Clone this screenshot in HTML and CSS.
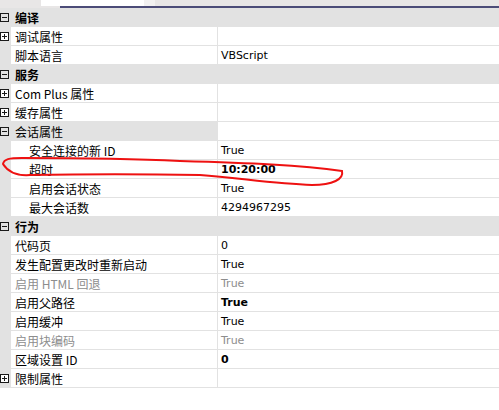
FILE: index.html
```html
<!DOCTYPE html>
<html lang="zh-CN">
<head>
    <meta charset="UTF-8">
    <meta name="viewport" content="width=device-width, initial-scale=1.0">
    <title>属性</title>
    <link rel="stylesheet" href="styles.css">
</head>
<body>
    <div class="page">
        <div class="topbar">
            <div class="tab"></div>
            <div class="rule"></div>
        </div>

        <div class="grid">
            <div class="row cat">
                <span class="gutter"><svg class="toggle" viewBox="0 0 9 9"><rect x="0.5" y="0.5" width="8" height="8"/><path d="M2 4.5h5"/></svg></span>
                <span class="name">编译</span>
            </div>
            <div class="row">
                <span class="gutter"><svg class="toggle plus" viewBox="0 0 9 9"><rect x="0.5" y="0.5" width="8" height="8"/><path d="M2 4.5h5M4.5 2v5"/></svg></span>
                <span class="name">调试属性</span>
                <span class="value"></span>
            </div>
            <div class="row">
                <span class="gutter"></span>
                <span class="name">脚本语言</span>
                <span class="value">VBScript</span>
            </div>

            <div class="row cat">
                <span class="gutter"><svg class="toggle" viewBox="0 0 9 9"><rect x="0.5" y="0.5" width="8" height="8"/><path d="M2 4.5h5"/></svg></span>
                <span class="name">服务</span>
            </div>
            <div class="row">
                <span class="gutter"><svg class="toggle plus" viewBox="0 0 9 9"><rect x="0.5" y="0.5" width="8" height="8"/><path d="M2 4.5h5M4.5 2v5"/></svg></span>
                <span class="name">Com Plus 属性</span>
                <span class="value"></span>
            </div>
            <div class="row">
                <span class="gutter"><svg class="toggle plus" viewBox="0 0 9 9"><rect x="0.5" y="0.5" width="8" height="8"/><path d="M2 4.5h5M4.5 2v5"/></svg></span>
                <span class="name">缓存属性</span>
                <span class="value"></span>
            </div>
            <div class="row selected">
                <span class="gutter"><svg class="toggle" viewBox="0 0 9 9"><rect x="0.5" y="0.5" width="8" height="8"/><path d="M2 4.5h5"/></svg></span>
                <span class="name">会话属性</span>
                <span class="value"></span>
            </div>
            <div class="row child">
                <span class="gutter"></span>
                <span class="name">安全连接的新 ID</span>
                <span class="value">True</span>
            </div>
            <div class="row child">
                <span class="gutter"></span>
                <span class="name">超时</span>
                <span class="value bold">10:20:00</span>
            </div>
            <div class="row child">
                <span class="gutter"></span>
                <span class="name">启用会话状态</span>
                <span class="value">True</span>
            </div>
            <div class="row child">
                <span class="gutter"></span>
                <span class="name">最大会话数</span>
                <span class="value">4294967295</span>
            </div>

            <div class="row cat">
                <span class="gutter"><svg class="toggle" viewBox="0 0 9 9"><rect x="0.5" y="0.5" width="8" height="8"/><path d="M2 4.5h5"/></svg></span>
                <span class="name">行为</span>
            </div>
            <div class="row">
                <span class="gutter"></span>
                <span class="name">代码页</span>
                <span class="value">0</span>
            </div>
            <div class="row">
                <span class="gutter"></span>
                <span class="name">发生配置更改时重新启动</span>
                <span class="value">True</span>
            </div>
            <div class="row disabled">
                <span class="gutter"></span>
                <span class="name">启用 HTML 回退</span>
                <span class="value">True</span>
            </div>
            <div class="row">
                <span class="gutter"></span>
                <span class="name">启用父路径</span>
                <span class="value bold">True</span>
            </div>
            <div class="row">
                <span class="gutter"></span>
                <span class="name">启用缓冲</span>
                <span class="value">True</span>
            </div>
            <div class="row disabled">
                <span class="gutter"></span>
                <span class="name">启用块编码</span>
                <span class="value">True</span>
            </div>
            <div class="row">
                <span class="gutter"></span>
                <span class="name">区域设置 ID</span>
                <span class="value bold">0</span>
            </div>
            <div class="row">
                <span class="gutter"><svg class="toggle plus" viewBox="0 0 9 9"><rect x="0.5" y="0.5" width="8" height="8"/><path d="M2 4.5h5M4.5 2v5"/></svg></span>
                <span class="name">限制属性</span>
                <span class="value"></span>
            </div>
        </div>

        <!-- hand-drawn red loop around the timeout row -->
        <svg class="mark" viewBox="0 0 499 410">
            <path d="M3 164 C4 159 9 158 22 158 C80 158 140 159 180 161 C250 163 300 165 342 171 C344 179 333 185 312 185 C275 184 240 178 200 175 C150 174 80 174 30 175 C16 176 8 172 3 164"/>
        </svg>
    </div>
</body>
</html>
```

FILE: styles.css
```css
body {
    margin: 0;
    background-color: #fff;
    font-family: "Noto Sans CJK SC", sans-serif;
    font-size: 12px;
    color: #000;
}

.page {
    position: relative;
    width: 499px;
    height: 410px;
    overflow: hidden;
}

/* strip above the grid */
.topbar {
    height: 8px;
    background-color: #e8e6e6;
}

.tab {
    margin-left: 41px;
    width: 103px;
    height: 6px;
    background-color: #fff;
    border-right: 11px solid #f2f1f1;
}

.rule {
    margin-left: 60px;
    height: 2px;
    background-color: #4c4c78;
}

.grid {
    display: flex;
    flex-direction: column;
}

.row {
    display: grid;
    grid-template-columns: 11px 206px 1fr;
    height: 19px;
    line-height: 16px;
}

.gutter {
    background-color: #e2e2e2;
    display: flex;
    align-items: center;
}

.toggle {
    width: 9px;
    height: 9px;
    fill: none;
    stroke: #1a1a1a;
    stroke-width: 1;
}

.toggle.plus {
    fill: #fff;
}

.name {
    padding-top: 2px;
    padding-left: 4px;
    border-bottom: 1px solid #e2e2e2;
    white-space: nowrap;
    overflow: hidden;
}

.value {
    padding-top: 2px;
    padding-left: 3px;
    border-left: 1px solid #e2e2e2;
    border-bottom: 1px solid #e2e2e2;
    font-family: "DejaVu Sans", sans-serif;
    font-size: 11px;
    white-space: nowrap;
}

.value.bold {
    font-weight: bold;
}

/* category header spans the whole width */
.row.cat {
    background-color: #e2e2e2;
}

.row.cat .name {
    grid-column: 2 / 4;
    border-bottom: none;
    font-weight: bold;
}

.row.selected .name {
    background-color: #e2e2e2;
}

.row.child .name {
    padding-left: 18px;
}

.row.disabled .name,
.row.disabled .value {
    color: #8d8d8d;
}

.mark {
    position: absolute;
    left: 0;
    top: 0;
    width: 499px;
    height: 410px;
    pointer-events: none;
    fill: none;
    stroke: #ee1111;
    stroke-width: 2;
    stroke-linecap: round;
}
```
